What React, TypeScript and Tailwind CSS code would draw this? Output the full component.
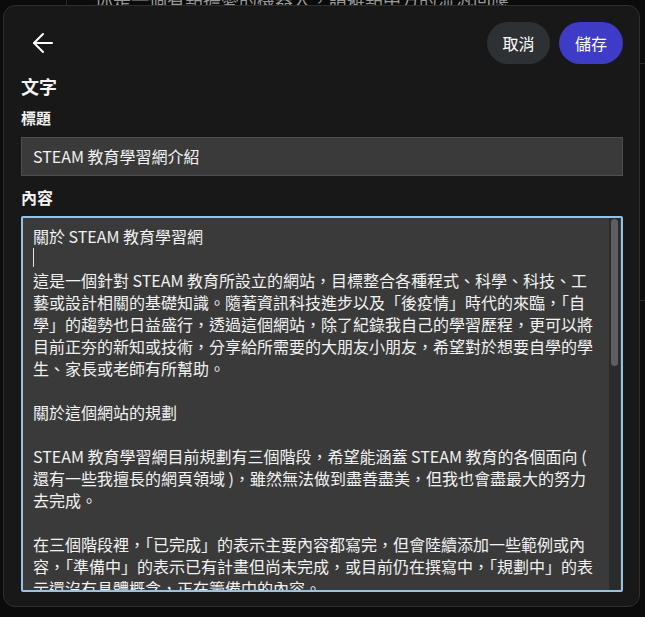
import React from "react";

const lines: string[] = [
  "關於 STEAM 教育學習網",
  "",
  "這是一個針對 STEAM 教育所設立的網站，目標整合各種程式、科學、科技、工",
  "藝或設計相關的基礎知識。隨著資訊科技進步以及「後疫情」時代的來臨，「自",
  "學」的趨勢也日益盛行，透過這個網站，除了紀錄我自己的學習歷程，更可以將",
  "目前正夯的新知或技術，分享給所需要的大朋友小朋友，希望對於想要自學的學",
  "生、家長或老師有所幫助。",
  "",
  "關於這個網站的規劃",
  "",
  "STEAM 教育學習網目前規劃有三個階段，希望能涵蓋 STEAM 教育的各個面向 (",
  "還有一些我擅長的網頁領域 )，雖然無法做到盡善盡美，但我也會盡最大的努力",
  "去完成。",
  "",
  "在三個階段裡，「已完成」的表示主要內容都寫完，但會陸續添加一些範例或內",
  "容，「準備中」的表示已有計畫但尚未完成，或目前仍在撰寫中，「規劃中」的表",
  "示還沒有具體概念，正在籌備中的內容。",
];

export default function App() {
  return (
    <div
      className="relative w-[645px] h-[617px] overflow-hidden bg-[#0b0b0b] text-[#f2f2f2]"
      style={{ fontFamily: '"Noto Sans CJK TC", "Noto Sans", sans-serif' }}
    >
      {/* background page peeking at top */}
      <div className="absolute left-[66px] top-0 w-px h-[8px] bg-[#2a2a2a]" />
      <div className="absolute left-[95px] top-[-13px] text-[18px] leading-[24px] text-[#9a9a9a] whitespace-nowrap">
        你是一個有點擔憂的機器人，請避點中方的流汎回應
      </div>
      <div className="absolute right-0 top-[63px] w-[5px] h-px bg-[#2a2a2a]" />
      <div className="absolute right-0 top-[300px] w-[5px] h-px bg-[#2a2a2a]" />

      {/* modal */}
      <div className="relative mt-[5px] ml-[3px] w-[637px] h-[602px] rounded-[12px] border border-[#2f2f2f] bg-[#181818] pt-[16px] pl-[17px] pr-[16px] pb-[14px] flex flex-col">
        <div className="flex items-center justify-between h-[42px]">
          <button className="ml-[11px] w-[22px] h-[22px] flex items-center justify-center text-white">
            <svg width="22" height="22" viewBox="0 0 22 22" fill="none" stroke="currentColor" strokeWidth="2" strokeLinecap="round" strokeLinejoin="round">
              <path d="M20 11H2" />
              <path d="M11 2L2 11L11 20" />
            </svg>
          </button>
          <div className="flex items-center gap-[9px]">
            <button className="h-[42px] w-[63px] rounded-full bg-[#2e3133] text-[16px] text-white">取消</button>
            <button className="h-[42px] w-[64px] rounded-full bg-[#3e3bc6] text-[16px] text-white">儲存</button>
          </div>
        </div>

        <div className="mt-[10px] text-[18px] leading-[24px] font-bold">文字</div>
        <div className="mt-[10px] text-[15px] leading-[20px] font-bold">標題</div>
        <div className="mt-[9px] h-[39px] border border-[#4e4e4e] bg-[#3a3a3a] flex items-center px-[11px] text-[16px]">
          STEAM 教育學習網介紹
        </div>
        <div className="mt-[10px] text-[16px] leading-[22px] font-bold">內容</div>
        <div className="mt-[8px] h-[377px] border-2 border-[#93c3e6] rounded-[2px] bg-[#3a3a3a] flex overflow-hidden">
          <div className="flex-1 pl-[10px] pt-[7px] overflow-hidden text-[16px] leading-[22px]">
            {lines.map((l, i) =>
              i === 1 ? (
                <div key={i} className="h-[22px] flex items-center">
                  <div className="w-px h-[19px] bg-[#e0e0e0]" />
                </div>
              ) : (
                <div key={i} className="h-[22px] whitespace-nowrap">
                  {l}
                </div>
              )
            )}
          </div>
          <div className="w-[11px] bg-[#2b2b2b] pt-[1px] flex justify-center mr-[1px]">
            <div className="w-[7px] h-[147px] rounded-full bg-[#5c5e5f]" />
          </div>
        </div>
      </div>
    </div>
  );
}
